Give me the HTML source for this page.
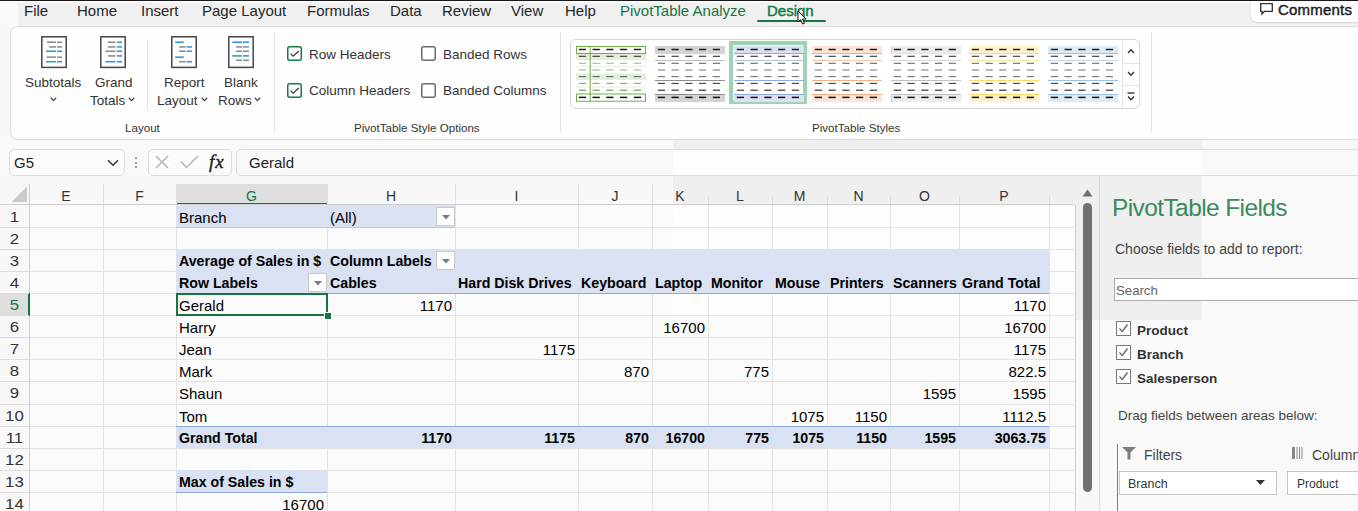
<!DOCTYPE html><html><head><meta charset="utf-8"><style>
html,body{margin:0;padding:0;}
body{width:1358px;height:511px;overflow:hidden;position:relative;background:#f7f7f7;font-family:"Liberation Sans",sans-serif;}
.t{position:absolute;white-space:nowrap;line-height:1;}
.c{position:absolute;white-space:nowrap;line-height:22px;height:22px;overflow:visible;}
svg{position:absolute;overflow:visible;}
</style></head><body>
<div style="position:absolute;left:0px;top:0px;width:1358px;height:1px;background:#1a1a1a"></div>
<div style="position:absolute;left:0px;top:1px;width:1358px;height:26px;background:#f9f9f9"></div>
<div style="position:absolute;left:18px;top:3px;width:1340px;height:24px;background:#f0f0f0"></div>
<div style="position:absolute;left:1251px;top:1px;width:120px;height:21px;background:#fdfdfd;border-radius:0 0 0 6px;box-shadow:0 1px 1px rgba(0,0,0,0.12)"></div>
<div class="t" style="left:24px;top:3px;font-size:15px;color:#262626;font-weight:normal;">File</div>
<div class="t" style="left:77px;top:3px;font-size:15px;color:#262626;font-weight:normal;">Home</div>
<div class="t" style="left:141px;top:3px;font-size:15px;color:#262626;font-weight:normal;">Insert</div>
<div class="t" style="left:202px;top:3px;font-size:15px;color:#262626;font-weight:normal;">Page Layout</div>
<div class="t" style="left:307px;top:3px;font-size:15px;color:#262626;font-weight:normal;">Formulas</div>
<div class="t" style="left:390px;top:3px;font-size:15px;color:#262626;font-weight:normal;">Data</div>
<div class="t" style="left:442px;top:3px;font-size:15px;color:#262626;font-weight:normal;">Review</div>
<div class="t" style="left:511px;top:3px;font-size:15px;color:#262626;font-weight:normal;">View</div>
<div class="t" style="left:565px;top:3px;font-size:15px;color:#262626;font-weight:normal;">Help</div>
<div class="t" style="left:620px;top:3px;font-size:15px;color:#1a7340;font-weight:normal;">PivotTable Analyze</div>
<div class="t" style="left:767px;top:3px;font-size:15px;color:#107c41;font-weight:normal;-webkit-text-stroke:0.45px #107c41">Design</div>
<div style="position:absolute;left:757px;top:20px;width:69px;height:2px;background:#16743f;border-radius:1px"></div>
<svg style="left:797px;top:10px" width="12" height="16" viewBox="0 0 12 16"><path d="M1 1 L1 12 L3.6 9.6 L5.6 14 L7.4 13.2 L5.5 9 L9 9 Z" fill="#fff" stroke="#111" stroke-width="1"/></svg>
<svg style="left:1260px;top:3px" width="14" height="12" viewBox="0 0 14 12"><path d="M0.7 0.7 H12.3 V8.3 H4.5 L2 11 V8.3 H0.7 Z" fill="none" stroke="#333" stroke-width="1.3"/></svg>
<div class="t" style="left:1278px;top:2px;font-size:15px;color:#1e1e1e;font-weight:normal;-webkit-text-stroke:0.45px #1e1e1e;letter-spacing:0.2px">Comments</div>
<div style="position:absolute;left:10px;top:26px;width:1400px;height:114px;background:#fefefe;border:1px solid #dcdcdc;border-radius:8px;box-sizing:border-box"></div>
<svg style="left:41px;top:36px" width="26" height="32" viewBox="0 0 26 32"><rect x="0.8" y="0.8" width="24.4" height="30.6" fill="#fff" stroke="#464646" stroke-width="1.5"/><line x1="6" y1="6.2" x2="15" y2="6.2" stroke="#8f8f8f" stroke-width="1.6"/><line x1="16" y1="6.2" x2="21.2" y2="6.2" stroke="#8f8f8f" stroke-width="1.6"/><line x1="8.2" y1="10.9" x2="15" y2="10.9" stroke="#8f8f8f" stroke-width="1.6"/><line x1="16" y1="10.9" x2="21" y2="10.9" stroke="#8f8f8f" stroke-width="1.6"/><line x1="5" y1="15.2" x2="15" y2="15.2" stroke="#3399dd" stroke-width="1.6"/><line x1="16" y1="15.2" x2="21" y2="15.2" stroke="#3399dd" stroke-width="1.6"/><line x1="6" y1="21.2" x2="15" y2="21.2" stroke="#8f8f8f" stroke-width="1.6"/><line x1="16" y1="21.2" x2="21" y2="21.2" stroke="#8f8f8f" stroke-width="1.6"/><line x1="5" y1="25.7" x2="15" y2="25.7" stroke="#3399dd" stroke-width="1.6"/><line x1="16" y1="25.7" x2="21" y2="25.7" stroke="#3399dd" stroke-width="1.6"/></svg>
<svg style="left:100px;top:36px" width="26" height="32" viewBox="0 0 26 32"><rect x="0.8" y="0.8" width="24.4" height="30.6" fill="#fff" stroke="#464646" stroke-width="1.5"/><line x1="7.8" y1="6.2" x2="15.6" y2="6.2" stroke="#8f8f8f" stroke-width="1.6"/><line x1="17" y1="6.2" x2="22" y2="6.2" stroke="#3399dd" stroke-width="1.6"/><line x1="8" y1="10.9" x2="15.6" y2="10.9" stroke="#8f8f8f" stroke-width="1.6"/><line x1="17" y1="10.9" x2="22" y2="10.9" stroke="#3399dd" stroke-width="1.6"/><line x1="5.4" y1="15.2" x2="15.6" y2="15.2" stroke="#8f8f8f" stroke-width="1.6"/><line x1="17" y1="15.2" x2="22" y2="15.2" stroke="#3399dd" stroke-width="1.6"/><line x1="8" y1="19.9" x2="15.6" y2="19.9" stroke="#8f8f8f" stroke-width="1.6"/><line x1="17" y1="19.9" x2="22" y2="19.9" stroke="#3399dd" stroke-width="1.6"/><line x1="5.4" y1="25.7" x2="15.6" y2="25.7" stroke="#3399dd" stroke-width="1.6"/><line x1="17" y1="25.7" x2="22" y2="25.7" stroke="#3399dd" stroke-width="1.6"/></svg>
<svg style="left:171px;top:36px" width="26" height="32" viewBox="0 0 26 32"><rect x="0.8" y="0.8" width="24.4" height="30.6" fill="#fff" stroke="#464646" stroke-width="1.5"/><line x1="4.2" y1="6.2" x2="12.8" y2="6.2" stroke="#3399dd" stroke-width="1.6"/><line x1="8" y1="10.9" x2="15" y2="10.9" stroke="#8f8f8f" stroke-width="1.6"/><line x1="16" y1="10.9" x2="21" y2="10.9" stroke="#3399dd" stroke-width="1.6"/><line x1="8" y1="15.2" x2="15" y2="15.2" stroke="#8f8f8f" stroke-width="1.6"/><line x1="16" y1="15.2" x2="21" y2="15.2" stroke="#3399dd" stroke-width="1.6"/><line x1="4.2" y1="21.2" x2="12.8" y2="21.2" stroke="#3399dd" stroke-width="1.6"/><line x1="8" y1="25.7" x2="15" y2="25.7" stroke="#8f8f8f" stroke-width="1.6"/><line x1="16" y1="25.7" x2="21" y2="25.7" stroke="#3399dd" stroke-width="1.6"/></svg>
<svg style="left:228px;top:36px" width="26" height="32" viewBox="0 0 26 32"><rect x="0.8" y="0.8" width="24.4" height="30.6" fill="#fff" stroke="#464646" stroke-width="1.5"/><line x1="4.3" y1="6.2" x2="14" y2="6.2" stroke="#3399dd" stroke-width="1.6"/><line x1="15" y1="6.2" x2="21" y2="6.2" stroke="#3399dd" stroke-width="1.6"/><line x1="8" y1="10.9" x2="14" y2="10.9" stroke="#8f8f8f" stroke-width="1.6"/><line x1="15" y1="10.9" x2="21" y2="10.9" stroke="#8f8f8f" stroke-width="1.6"/><line x1="8" y1="15.2" x2="14" y2="15.2" stroke="#8f8f8f" stroke-width="1.6"/><line x1="15" y1="15.2" x2="21" y2="15.2" stroke="#8f8f8f" stroke-width="1.6"/><line x1="4.3" y1="19.9" x2="14" y2="19.9" stroke="#3399dd" stroke-width="1.6"/><line x1="15" y1="19.9" x2="21" y2="19.9" stroke="#3399dd" stroke-width="1.6"/><line x1="8" y1="24.3" x2="14" y2="24.3" stroke="#8f8f8f" stroke-width="1.6"/><line x1="15" y1="24.3" x2="21" y2="24.3" stroke="#8f8f8f" stroke-width="1.6"/></svg>
<div class="t" style="left:25px;top:76px;font-size:13.5px;color:#333;font-weight:normal;">Subtotals</div>
<svg style="left:50px;top:97px" width="7" height="5" viewBox="0 0 7 5"><path d="M0.8 0.8 L3.5 3.6 L6.2 0.8" fill="none" stroke="#444" stroke-width="1.3"/></svg>
<div class="t" style="left:95px;top:76px;font-size:13.5px;color:#333;font-weight:normal;">Grand</div>
<div class="t" style="left:90px;top:94px;font-size:13.5px;color:#333;font-weight:normal;">Totals</div>
<svg style="left:128px;top:97px" width="7" height="5" viewBox="0 0 7 5"><path d="M0.8 0.8 L3.5 3.6 L6.2 0.8" fill="none" stroke="#444" stroke-width="1.3"/></svg>
<div class="t" style="left:164px;top:76px;font-size:13.5px;color:#333;font-weight:normal;">Report</div>
<div class="t" style="left:157px;top:94px;font-size:13.5px;color:#333;font-weight:normal;">Layout</div>
<svg style="left:201px;top:97px" width="7" height="5" viewBox="0 0 7 5"><path d="M0.8 0.8 L3.5 3.6 L6.2 0.8" fill="none" stroke="#444" stroke-width="1.3"/></svg>
<div class="t" style="left:224px;top:76px;font-size:13.5px;color:#333;font-weight:normal;">Blank</div>
<div class="t" style="left:218px;top:94px;font-size:13.5px;color:#333;font-weight:normal;">Rows</div>
<svg style="left:254px;top:97px" width="7" height="5" viewBox="0 0 7 5"><path d="M0.8 0.8 L3.5 3.6 L6.2 0.8" fill="none" stroke="#444" stroke-width="1.3"/></svg>
<div style="position:absolute;left:147px;top:39px;width:1px;height:71px;background:#e3e3e3"></div>
<div class="t" style="left:125px;top:122px;font-size:11.6px;color:#333;font-weight:normal;">Layout</div>
<div style="position:absolute;left:274px;top:32px;width:1px;height:100px;background:#e3e3e3"></div>
<svg style="left:287px;top:46.3px" width="15" height="15" viewBox="0 0 15 15"><rect x="0.75" y="0.75" width="13.5" height="13.5" rx="2" fill="#fff" stroke="#157a43" stroke-width="1.5"/><path d="M3.6 7.7 L6.1 10.2 L11.8 5" fill="none" stroke="#333" stroke-width="1.15"/></svg>
<div class="t" style="left:309px;top:48px;font-size:13.5px;color:#333;font-weight:normal;">Row Headers</div>
<svg style="left:287px;top:82.8px" width="15" height="15" viewBox="0 0 15 15"><rect x="0.75" y="0.75" width="13.5" height="13.5" rx="2" fill="#fff" stroke="#157a43" stroke-width="1.5"/><path d="M3.6 7.7 L6.1 10.2 L11.8 5" fill="none" stroke="#333" stroke-width="1.15"/></svg>
<div class="t" style="left:309px;top:84px;font-size:13.5px;color:#333;font-weight:normal;">Column Headers</div>
<svg style="left:421px;top:46.3px" width="15" height="15" viewBox="0 0 15 15"><rect x="0.75" y="0.75" width="13.5" height="13.5" rx="2" fill="#fff" stroke="#6b6b6b" stroke-width="1.5"/></svg>
<div class="t" style="left:443px;top:48px;font-size:13.5px;color:#333;font-weight:normal;">Banded Rows</div>
<svg style="left:421px;top:82.8px" width="15" height="15" viewBox="0 0 15 15"><rect x="0.75" y="0.75" width="13.5" height="13.5" rx="2" fill="#fff" stroke="#6b6b6b" stroke-width="1.5"/></svg>
<div class="t" style="left:443px;top:84px;font-size:13.5px;color:#333;font-weight:normal;">Banded Columns</div>
<div class="t" style="left:354px;top:122px;font-size:11.6px;color:#333;font-weight:normal;">PivotTable Style Options</div>
<div style="position:absolute;left:560px;top:32px;width:1px;height:100px;background:#e3e3e3"></div>
<div style="position:absolute;left:1151px;top:32px;width:1px;height:100px;background:#e3e3e3"></div>
<div class="t" style="left:812px;top:122px;font-size:11.6px;color:#333;font-weight:normal;">PivotTable Styles</div>
<div style="position:absolute;left:570px;top:39px;width:570px;height:70px;background:#fff;border:1px solid #d6d6d6;border-radius:6px;box-sizing:border-box"></div>
<div style="position:absolute;left:1122px;top:40px;width:1px;height:68px;background:#e5e5e5"></div>
<div style="position:absolute;left:1123px;top:63px;width:16px;height:1px;background:#e5e5e5"></div>
<div style="position:absolute;left:1123px;top:85px;width:16px;height:1px;background:#e5e5e5"></div>
<svg style="left:1127px;top:48px" width="8" height="6" viewBox="0 0 8 6"><path d="M1 5 L4 1.8 L7 5" fill="none" stroke="#333" stroke-width="1.4"/></svg>
<svg style="left:1127px;top:71px" width="8" height="6" viewBox="0 0 8 6"><path d="M1 1 L4 4.2 L7 1" fill="none" stroke="#333" stroke-width="1.4"/></svg>
<svg style="left:1127px;top:92px" width="8" height="10" viewBox="0 0 8 10"><path d="M0.5 1 H7.5" stroke="#333" stroke-width="1.4"/><path d="M1 4.5 L4 7.7 L7 4.5" fill="none" stroke="#333" stroke-width="1.4"/></svg>
<div style="position:absolute;left:729.3px;top:41.3px;width:78.2px;height:63px;border:4.3px solid #9dd3b1;box-sizing:border-box"></div>
<svg style="left:576px;top:46px" width="70" height="56" viewBox="0 0 70 56"><rect x="0" y="7.5" width="70" height="6.5" fill="#e2efda"/><rect x="0" y="27.5" width="70" height="6.5" fill="#e2efda"/><line x1="0" y1="20.6" x2="70" y2="20.6" stroke="#e7f0e0" stroke-width="1"/><line x1="0" y1="41" x2="70" y2="41" stroke="#e2efda" stroke-width="1"/><rect x="0.5" y="0.5" width="69" height="7" fill="none" stroke="#70ad47" stroke-width="1"/><rect x="0.5" y="48" width="69" height="7.2" fill="none" stroke="#70ad47" stroke-width="1"/><line x1="14.2" y1="0" x2="14.2" y2="56" stroke="#70ad47" stroke-width="1"/><line x1="2.8" y1="3.5" x2="10.0" y2="3.5" stroke="#1e1e1e" stroke-width="1.5"/><line x1="16.5" y1="3.5" x2="23.8" y2="3.5" stroke="#1e1e1e" stroke-width="1.5"/><line x1="30.3" y1="3.5" x2="37.5" y2="3.5" stroke="#1e1e1e" stroke-width="1.5"/><line x1="44.0" y1="3.5" x2="51.2" y2="3.5" stroke="#1e1e1e" stroke-width="1.5"/><line x1="57.8" y1="3.5" x2="65.0" y2="3.5" stroke="#1e1e1e" stroke-width="1.5"/><line x1="2.8" y1="10.3" x2="10.0" y2="10.3" stroke="#3a3a3a" stroke-width="1.15"/><line x1="16.5" y1="10.3" x2="23.8" y2="10.3" stroke="#3a3a3a" stroke-width="1.15"/><line x1="30.3" y1="10.3" x2="37.5" y2="10.3" stroke="#3a3a3a" stroke-width="1.15"/><line x1="44.0" y1="10.3" x2="51.2" y2="10.3" stroke="#3a3a3a" stroke-width="1.15"/><line x1="57.8" y1="10.3" x2="65.0" y2="10.3" stroke="#3a3a3a" stroke-width="1.15"/><line x1="2.8" y1="17.3" x2="10.0" y2="17.3" stroke="#a3bf92" stroke-width="1.15"/><line x1="16.5" y1="17.3" x2="23.8" y2="17.3" stroke="#a3bf92" stroke-width="1.15"/><line x1="30.3" y1="17.3" x2="37.5" y2="17.3" stroke="#a3bf92" stroke-width="1.15"/><line x1="44.0" y1="17.3" x2="51.2" y2="17.3" stroke="#a3bf92" stroke-width="1.15"/><line x1="57.8" y1="17.3" x2="65.0" y2="17.3" stroke="#a3bf92" stroke-width="1.15"/><line x1="2.8" y1="24.0" x2="10.0" y2="24.0" stroke="#b3c7a5" stroke-width="1.4"/><line x1="16.5" y1="24.0" x2="23.8" y2="24.0" stroke="#b3c7a5" stroke-width="1.4"/><line x1="30.3" y1="24.0" x2="37.5" y2="24.0" stroke="#b3c7a5" stroke-width="1.4"/><line x1="44.0" y1="24.0" x2="51.2" y2="24.0" stroke="#b3c7a5" stroke-width="1.4"/><line x1="57.8" y1="24.0" x2="65.0" y2="24.0" stroke="#b3c7a5" stroke-width="1.4"/><line x1="2.8" y1="30.6" x2="10.0" y2="30.6" stroke="#6a6a6a" stroke-width="1.15"/><line x1="16.5" y1="30.6" x2="23.8" y2="30.6" stroke="#6a6a6a" stroke-width="1.15"/><line x1="30.3" y1="30.6" x2="37.5" y2="30.6" stroke="#6a6a6a" stroke-width="1.15"/><line x1="44.0" y1="30.6" x2="51.2" y2="30.6" stroke="#6a6a6a" stroke-width="1.15"/><line x1="57.8" y1="30.6" x2="65.0" y2="30.6" stroke="#6a6a6a" stroke-width="1.15"/><line x1="2.8" y1="37.4" x2="10.0" y2="37.4" stroke="#8db074" stroke-width="1.15"/><line x1="16.5" y1="37.4" x2="23.8" y2="37.4" stroke="#8db074" stroke-width="1.15"/><line x1="30.3" y1="37.4" x2="37.5" y2="37.4" stroke="#8db074" stroke-width="1.15"/><line x1="44.0" y1="37.4" x2="51.2" y2="37.4" stroke="#8db074" stroke-width="1.15"/><line x1="57.8" y1="37.4" x2="65.0" y2="37.4" stroke="#8db074" stroke-width="1.15"/><line x1="2.8" y1="44.2" x2="10.0" y2="44.2" stroke="#6c9b52" stroke-width="1.15"/><line x1="16.5" y1="44.2" x2="23.8" y2="44.2" stroke="#6c9b52" stroke-width="1.15"/><line x1="30.3" y1="44.2" x2="37.5" y2="44.2" stroke="#6c9b52" stroke-width="1.15"/><line x1="44.0" y1="44.2" x2="51.2" y2="44.2" stroke="#6c9b52" stroke-width="1.15"/><line x1="57.8" y1="44.2" x2="65.0" y2="44.2" stroke="#6c9b52" stroke-width="1.15"/><line x1="2.8" y1="51.4" x2="10.0" y2="51.4" stroke="#111" stroke-width="1.5"/><line x1="16.5" y1="51.4" x2="23.8" y2="51.4" stroke="#111" stroke-width="1.5"/><line x1="30.3" y1="51.4" x2="37.5" y2="51.4" stroke="#111" stroke-width="1.5"/><line x1="44.0" y1="51.4" x2="51.2" y2="51.4" stroke="#111" stroke-width="1.5"/><line x1="57.8" y1="51.4" x2="65.0" y2="51.4" stroke="#111" stroke-width="1.5"/></svg>
<svg style="left:655px;top:46px" width="70" height="56" viewBox="0 0 70 56"><rect x="0" y="0" width="70" height="8" fill="#d4d4d4"/><rect x="0" y="48" width="70" height="8" fill="#d4d4d4"/><line x1="0" y1="14.5" x2="70" y2="14.5" stroke="#bdbdbd" stroke-width="1"/><line x1="0" y1="34.5" x2="70" y2="34.5" stroke="#8f8f8f" stroke-width="1"/><line x1="0" y1="48.5" x2="70" y2="48.5" stroke="#8f8f8f" stroke-width="1"/><line x1="2.8" y1="3.5" x2="10.0" y2="3.5" stroke="#1e1e1e" stroke-width="1.5"/><line x1="16.5" y1="3.5" x2="23.8" y2="3.5" stroke="#1e1e1e" stroke-width="1.5"/><line x1="30.3" y1="3.5" x2="37.5" y2="3.5" stroke="#1e1e1e" stroke-width="1.5"/><line x1="44.0" y1="3.5" x2="51.2" y2="3.5" stroke="#1e1e1e" stroke-width="1.5"/><line x1="57.8" y1="3.5" x2="65.0" y2="3.5" stroke="#1e1e1e" stroke-width="1.5"/><line x1="2.8" y1="10.3" x2="10.0" y2="10.3" stroke="#3a3a3a" stroke-width="1.15"/><line x1="16.5" y1="10.3" x2="23.8" y2="10.3" stroke="#3a3a3a" stroke-width="1.15"/><line x1="30.3" y1="10.3" x2="37.5" y2="10.3" stroke="#3a3a3a" stroke-width="1.15"/><line x1="44.0" y1="10.3" x2="51.2" y2="10.3" stroke="#3a3a3a" stroke-width="1.15"/><line x1="57.8" y1="10.3" x2="65.0" y2="10.3" stroke="#3a3a3a" stroke-width="1.15"/><line x1="2.8" y1="17.3" x2="10.0" y2="17.3" stroke="#6e6e6e" stroke-width="1.15"/><line x1="16.5" y1="17.3" x2="23.8" y2="17.3" stroke="#6e6e6e" stroke-width="1.15"/><line x1="30.3" y1="17.3" x2="37.5" y2="17.3" stroke="#6e6e6e" stroke-width="1.15"/><line x1="44.0" y1="17.3" x2="51.2" y2="17.3" stroke="#6e6e6e" stroke-width="1.15"/><line x1="57.8" y1="17.3" x2="65.0" y2="17.3" stroke="#6e6e6e" stroke-width="1.15"/><line x1="2.8" y1="24.0" x2="10.0" y2="24.0" stroke="#9a9a9a" stroke-width="1.4"/><line x1="16.5" y1="24.0" x2="23.8" y2="24.0" stroke="#9a9a9a" stroke-width="1.4"/><line x1="30.3" y1="24.0" x2="37.5" y2="24.0" stroke="#9a9a9a" stroke-width="1.4"/><line x1="44.0" y1="24.0" x2="51.2" y2="24.0" stroke="#9a9a9a" stroke-width="1.4"/><line x1="57.8" y1="24.0" x2="65.0" y2="24.0" stroke="#9a9a9a" stroke-width="1.4"/><line x1="2.8" y1="30.6" x2="10.0" y2="30.6" stroke="#7a7a7a" stroke-width="1.15"/><line x1="16.5" y1="30.6" x2="23.8" y2="30.6" stroke="#7a7a7a" stroke-width="1.15"/><line x1="30.3" y1="30.6" x2="37.5" y2="30.6" stroke="#7a7a7a" stroke-width="1.15"/><line x1="44.0" y1="30.6" x2="51.2" y2="30.6" stroke="#7a7a7a" stroke-width="1.15"/><line x1="57.8" y1="30.6" x2="65.0" y2="30.6" stroke="#7a7a7a" stroke-width="1.15"/><line x1="2.8" y1="37.4" x2="10.0" y2="37.4" stroke="#4a4a4a" stroke-width="1.15"/><line x1="16.5" y1="37.4" x2="23.8" y2="37.4" stroke="#4a4a4a" stroke-width="1.15"/><line x1="30.3" y1="37.4" x2="37.5" y2="37.4" stroke="#4a4a4a" stroke-width="1.15"/><line x1="44.0" y1="37.4" x2="51.2" y2="37.4" stroke="#4a4a4a" stroke-width="1.15"/><line x1="57.8" y1="37.4" x2="65.0" y2="37.4" stroke="#4a4a4a" stroke-width="1.15"/><line x1="2.8" y1="44.2" x2="10.0" y2="44.2" stroke="#2a2a2a" stroke-width="1.15"/><line x1="16.5" y1="44.2" x2="23.8" y2="44.2" stroke="#2a2a2a" stroke-width="1.15"/><line x1="30.3" y1="44.2" x2="37.5" y2="44.2" stroke="#2a2a2a" stroke-width="1.15"/><line x1="44.0" y1="44.2" x2="51.2" y2="44.2" stroke="#2a2a2a" stroke-width="1.15"/><line x1="57.8" y1="44.2" x2="65.0" y2="44.2" stroke="#2a2a2a" stroke-width="1.15"/><line x1="2.8" y1="51.4" x2="10.0" y2="51.4" stroke="#111" stroke-width="1.5"/><line x1="16.5" y1="51.4" x2="23.8" y2="51.4" stroke="#111" stroke-width="1.5"/><line x1="30.3" y1="51.4" x2="37.5" y2="51.4" stroke="#111" stroke-width="1.5"/><line x1="44.0" y1="51.4" x2="51.2" y2="51.4" stroke="#111" stroke-width="1.5"/><line x1="57.8" y1="51.4" x2="65.0" y2="51.4" stroke="#111" stroke-width="1.5"/></svg>
<svg style="left:734px;top:46px" width="70" height="56" viewBox="0 0 70 56"><rect x="0" y="0" width="70" height="8" fill="#d9e1f2"/><rect x="0" y="48" width="70" height="8" fill="#d9e1f2"/><line x1="0" y1="7.5" x2="70" y2="7.5" stroke="#8ea9db" stroke-width="1"/><line x1="0" y1="14.5" x2="70" y2="14.5" stroke="#b4c6e7" stroke-width="1"/><line x1="0" y1="34.5" x2="70" y2="34.5" stroke="#8ea9db" stroke-width="1"/><line x1="0" y1="48.5" x2="70" y2="48.5" stroke="#8ea9db" stroke-width="1"/><line x1="2.8" y1="3.5" x2="10.0" y2="3.5" stroke="#1e1e1e" stroke-width="1.5"/><line x1="16.5" y1="3.5" x2="23.8" y2="3.5" stroke="#1e1e1e" stroke-width="1.5"/><line x1="30.3" y1="3.5" x2="37.5" y2="3.5" stroke="#1e1e1e" stroke-width="1.5"/><line x1="44.0" y1="3.5" x2="51.2" y2="3.5" stroke="#1e1e1e" stroke-width="1.5"/><line x1="57.8" y1="3.5" x2="65.0" y2="3.5" stroke="#1e1e1e" stroke-width="1.5"/><line x1="2.8" y1="10.3" x2="10.0" y2="10.3" stroke="#3a3a3a" stroke-width="1.15"/><line x1="16.5" y1="10.3" x2="23.8" y2="10.3" stroke="#3a3a3a" stroke-width="1.15"/><line x1="30.3" y1="10.3" x2="37.5" y2="10.3" stroke="#3a3a3a" stroke-width="1.15"/><line x1="44.0" y1="10.3" x2="51.2" y2="10.3" stroke="#3a3a3a" stroke-width="1.15"/><line x1="57.8" y1="10.3" x2="65.0" y2="10.3" stroke="#3a3a3a" stroke-width="1.15"/><line x1="2.8" y1="17.3" x2="10.0" y2="17.3" stroke="#6e6e6e" stroke-width="1.15"/><line x1="16.5" y1="17.3" x2="23.8" y2="17.3" stroke="#6e6e6e" stroke-width="1.15"/><line x1="30.3" y1="17.3" x2="37.5" y2="17.3" stroke="#6e6e6e" stroke-width="1.15"/><line x1="44.0" y1="17.3" x2="51.2" y2="17.3" stroke="#6e6e6e" stroke-width="1.15"/><line x1="57.8" y1="17.3" x2="65.0" y2="17.3" stroke="#6e6e6e" stroke-width="1.15"/><line x1="2.8" y1="24.0" x2="10.0" y2="24.0" stroke="#9a9a9a" stroke-width="1.4"/><line x1="16.5" y1="24.0" x2="23.8" y2="24.0" stroke="#9a9a9a" stroke-width="1.4"/><line x1="30.3" y1="24.0" x2="37.5" y2="24.0" stroke="#9a9a9a" stroke-width="1.4"/><line x1="44.0" y1="24.0" x2="51.2" y2="24.0" stroke="#9a9a9a" stroke-width="1.4"/><line x1="57.8" y1="24.0" x2="65.0" y2="24.0" stroke="#9a9a9a" stroke-width="1.4"/><line x1="2.8" y1="30.6" x2="10.0" y2="30.6" stroke="#7a7a7a" stroke-width="1.15"/><line x1="16.5" y1="30.6" x2="23.8" y2="30.6" stroke="#7a7a7a" stroke-width="1.15"/><line x1="30.3" y1="30.6" x2="37.5" y2="30.6" stroke="#7a7a7a" stroke-width="1.15"/><line x1="44.0" y1="30.6" x2="51.2" y2="30.6" stroke="#7a7a7a" stroke-width="1.15"/><line x1="57.8" y1="30.6" x2="65.0" y2="30.6" stroke="#7a7a7a" stroke-width="1.15"/><line x1="2.8" y1="37.4" x2="10.0" y2="37.4" stroke="#4a4a4a" stroke-width="1.15"/><line x1="16.5" y1="37.4" x2="23.8" y2="37.4" stroke="#4a4a4a" stroke-width="1.15"/><line x1="30.3" y1="37.4" x2="37.5" y2="37.4" stroke="#4a4a4a" stroke-width="1.15"/><line x1="44.0" y1="37.4" x2="51.2" y2="37.4" stroke="#4a4a4a" stroke-width="1.15"/><line x1="57.8" y1="37.4" x2="65.0" y2="37.4" stroke="#4a4a4a" stroke-width="1.15"/><line x1="2.8" y1="44.2" x2="10.0" y2="44.2" stroke="#2a2a2a" stroke-width="1.15"/><line x1="16.5" y1="44.2" x2="23.8" y2="44.2" stroke="#2a2a2a" stroke-width="1.15"/><line x1="30.3" y1="44.2" x2="37.5" y2="44.2" stroke="#2a2a2a" stroke-width="1.15"/><line x1="44.0" y1="44.2" x2="51.2" y2="44.2" stroke="#2a2a2a" stroke-width="1.15"/><line x1="57.8" y1="44.2" x2="65.0" y2="44.2" stroke="#2a2a2a" stroke-width="1.15"/><line x1="2.8" y1="51.4" x2="10.0" y2="51.4" stroke="#111" stroke-width="1.5"/><line x1="16.5" y1="51.4" x2="23.8" y2="51.4" stroke="#111" stroke-width="1.5"/><line x1="30.3" y1="51.4" x2="37.5" y2="51.4" stroke="#111" stroke-width="1.5"/><line x1="44.0" y1="51.4" x2="51.2" y2="51.4" stroke="#111" stroke-width="1.5"/><line x1="57.8" y1="51.4" x2="65.0" y2="51.4" stroke="#111" stroke-width="1.5"/></svg>
<svg style="left:812px;top:46px" width="70" height="56" viewBox="0 0 70 56"><rect x="0" y="0" width="70" height="8" fill="#fce4d6"/><rect x="0" y="48" width="70" height="8" fill="#fce4d6"/><line x1="0" y1="7.5" x2="70" y2="7.5" stroke="#f4b084" stroke-width="1"/><line x1="0" y1="14.5" x2="70" y2="14.5" stroke="#f8cbad" stroke-width="1"/><line x1="0" y1="34.5" x2="70" y2="34.5" stroke="#f4b084" stroke-width="1"/><line x1="0" y1="48.5" x2="70" y2="48.5" stroke="#f4b084" stroke-width="1"/><line x1="2.8" y1="3.5" x2="10.0" y2="3.5" stroke="#1e1e1e" stroke-width="1.5"/><line x1="16.5" y1="3.5" x2="23.8" y2="3.5" stroke="#1e1e1e" stroke-width="1.5"/><line x1="30.3" y1="3.5" x2="37.5" y2="3.5" stroke="#1e1e1e" stroke-width="1.5"/><line x1="44.0" y1="3.5" x2="51.2" y2="3.5" stroke="#1e1e1e" stroke-width="1.5"/><line x1="57.8" y1="3.5" x2="65.0" y2="3.5" stroke="#1e1e1e" stroke-width="1.5"/><line x1="2.8" y1="10.3" x2="10.0" y2="10.3" stroke="#3a3a3a" stroke-width="1.15"/><line x1="16.5" y1="10.3" x2="23.8" y2="10.3" stroke="#3a3a3a" stroke-width="1.15"/><line x1="30.3" y1="10.3" x2="37.5" y2="10.3" stroke="#3a3a3a" stroke-width="1.15"/><line x1="44.0" y1="10.3" x2="51.2" y2="10.3" stroke="#3a3a3a" stroke-width="1.15"/><line x1="57.8" y1="10.3" x2="65.0" y2="10.3" stroke="#3a3a3a" stroke-width="1.15"/><line x1="2.8" y1="17.3" x2="10.0" y2="17.3" stroke="#6e6e6e" stroke-width="1.15"/><line x1="16.5" y1="17.3" x2="23.8" y2="17.3" stroke="#6e6e6e" stroke-width="1.15"/><line x1="30.3" y1="17.3" x2="37.5" y2="17.3" stroke="#6e6e6e" stroke-width="1.15"/><line x1="44.0" y1="17.3" x2="51.2" y2="17.3" stroke="#6e6e6e" stroke-width="1.15"/><line x1="57.8" y1="17.3" x2="65.0" y2="17.3" stroke="#6e6e6e" stroke-width="1.15"/><line x1="2.8" y1="24.0" x2="10.0" y2="24.0" stroke="#9a9a9a" stroke-width="1.4"/><line x1="16.5" y1="24.0" x2="23.8" y2="24.0" stroke="#9a9a9a" stroke-width="1.4"/><line x1="30.3" y1="24.0" x2="37.5" y2="24.0" stroke="#9a9a9a" stroke-width="1.4"/><line x1="44.0" y1="24.0" x2="51.2" y2="24.0" stroke="#9a9a9a" stroke-width="1.4"/><line x1="57.8" y1="24.0" x2="65.0" y2="24.0" stroke="#9a9a9a" stroke-width="1.4"/><line x1="2.8" y1="30.6" x2="10.0" y2="30.6" stroke="#7a7a7a" stroke-width="1.15"/><line x1="16.5" y1="30.6" x2="23.8" y2="30.6" stroke="#7a7a7a" stroke-width="1.15"/><line x1="30.3" y1="30.6" x2="37.5" y2="30.6" stroke="#7a7a7a" stroke-width="1.15"/><line x1="44.0" y1="30.6" x2="51.2" y2="30.6" stroke="#7a7a7a" stroke-width="1.15"/><line x1="57.8" y1="30.6" x2="65.0" y2="30.6" stroke="#7a7a7a" stroke-width="1.15"/><line x1="2.8" y1="37.4" x2="10.0" y2="37.4" stroke="#4a4a4a" stroke-width="1.15"/><line x1="16.5" y1="37.4" x2="23.8" y2="37.4" stroke="#4a4a4a" stroke-width="1.15"/><line x1="30.3" y1="37.4" x2="37.5" y2="37.4" stroke="#4a4a4a" stroke-width="1.15"/><line x1="44.0" y1="37.4" x2="51.2" y2="37.4" stroke="#4a4a4a" stroke-width="1.15"/><line x1="57.8" y1="37.4" x2="65.0" y2="37.4" stroke="#4a4a4a" stroke-width="1.15"/><line x1="2.8" y1="44.2" x2="10.0" y2="44.2" stroke="#2a2a2a" stroke-width="1.15"/><line x1="16.5" y1="44.2" x2="23.8" y2="44.2" stroke="#2a2a2a" stroke-width="1.15"/><line x1="30.3" y1="44.2" x2="37.5" y2="44.2" stroke="#2a2a2a" stroke-width="1.15"/><line x1="44.0" y1="44.2" x2="51.2" y2="44.2" stroke="#2a2a2a" stroke-width="1.15"/><line x1="57.8" y1="44.2" x2="65.0" y2="44.2" stroke="#2a2a2a" stroke-width="1.15"/><line x1="2.8" y1="51.4" x2="10.0" y2="51.4" stroke="#111" stroke-width="1.5"/><line x1="16.5" y1="51.4" x2="23.8" y2="51.4" stroke="#111" stroke-width="1.5"/><line x1="30.3" y1="51.4" x2="37.5" y2="51.4" stroke="#111" stroke-width="1.5"/><line x1="44.0" y1="51.4" x2="51.2" y2="51.4" stroke="#111" stroke-width="1.5"/><line x1="57.8" y1="51.4" x2="65.0" y2="51.4" stroke="#111" stroke-width="1.5"/></svg>
<svg style="left:891px;top:46px" width="70" height="56" viewBox="0 0 70 56"><rect x="0" y="0" width="70" height="8" fill="#ececec"/><rect x="0" y="48" width="70" height="8" fill="#ececec"/><line x1="0" y1="7.5" x2="70" y2="7.5" stroke="#e0e0e0" stroke-width="1"/><line x1="0" y1="14.5" x2="70" y2="14.5" stroke="#d9d9d9" stroke-width="1"/><line x1="0" y1="34.5" x2="70" y2="34.5" stroke="#bfbfbf" stroke-width="1"/><line x1="0" y1="48.5" x2="70" y2="48.5" stroke="#bfbfbf" stroke-width="1"/><line x1="0.5" y1="0" x2="0.5" y2="7.6" stroke="#cfcfcf" stroke-width="1"/><line x1="0.5" y1="48.3" x2="0.5" y2="56" stroke="#cfcfcf" stroke-width="1"/><line x1="2.8" y1="3.5" x2="10.0" y2="3.5" stroke="#1e1e1e" stroke-width="1.5"/><line x1="16.5" y1="3.5" x2="23.8" y2="3.5" stroke="#1e1e1e" stroke-width="1.5"/><line x1="30.3" y1="3.5" x2="37.5" y2="3.5" stroke="#1e1e1e" stroke-width="1.5"/><line x1="44.0" y1="3.5" x2="51.2" y2="3.5" stroke="#1e1e1e" stroke-width="1.5"/><line x1="57.8" y1="3.5" x2="65.0" y2="3.5" stroke="#1e1e1e" stroke-width="1.5"/><line x1="2.8" y1="10.3" x2="10.0" y2="10.3" stroke="#3a3a3a" stroke-width="1.15"/><line x1="16.5" y1="10.3" x2="23.8" y2="10.3" stroke="#3a3a3a" stroke-width="1.15"/><line x1="30.3" y1="10.3" x2="37.5" y2="10.3" stroke="#3a3a3a" stroke-width="1.15"/><line x1="44.0" y1="10.3" x2="51.2" y2="10.3" stroke="#3a3a3a" stroke-width="1.15"/><line x1="57.8" y1="10.3" x2="65.0" y2="10.3" stroke="#3a3a3a" stroke-width="1.15"/><line x1="2.8" y1="17.3" x2="10.0" y2="17.3" stroke="#6e6e6e" stroke-width="1.15"/><line x1="16.5" y1="17.3" x2="23.8" y2="17.3" stroke="#6e6e6e" stroke-width="1.15"/><line x1="30.3" y1="17.3" x2="37.5" y2="17.3" stroke="#6e6e6e" stroke-width="1.15"/><line x1="44.0" y1="17.3" x2="51.2" y2="17.3" stroke="#6e6e6e" stroke-width="1.15"/><line x1="57.8" y1="17.3" x2="65.0" y2="17.3" stroke="#6e6e6e" stroke-width="1.15"/><line x1="2.8" y1="24.0" x2="10.0" y2="24.0" stroke="#9a9a9a" stroke-width="1.4"/><line x1="16.5" y1="24.0" x2="23.8" y2="24.0" stroke="#9a9a9a" stroke-width="1.4"/><line x1="30.3" y1="24.0" x2="37.5" y2="24.0" stroke="#9a9a9a" stroke-width="1.4"/><line x1="44.0" y1="24.0" x2="51.2" y2="24.0" stroke="#9a9a9a" stroke-width="1.4"/><line x1="57.8" y1="24.0" x2="65.0" y2="24.0" stroke="#9a9a9a" stroke-width="1.4"/><line x1="2.8" y1="30.6" x2="10.0" y2="30.6" stroke="#7a7a7a" stroke-width="1.15"/><line x1="16.5" y1="30.6" x2="23.8" y2="30.6" stroke="#7a7a7a" stroke-width="1.15"/><line x1="30.3" y1="30.6" x2="37.5" y2="30.6" stroke="#7a7a7a" stroke-width="1.15"/><line x1="44.0" y1="30.6" x2="51.2" y2="30.6" stroke="#7a7a7a" stroke-width="1.15"/><line x1="57.8" y1="30.6" x2="65.0" y2="30.6" stroke="#7a7a7a" stroke-width="1.15"/><line x1="2.8" y1="37.4" x2="10.0" y2="37.4" stroke="#4a4a4a" stroke-width="1.15"/><line x1="16.5" y1="37.4" x2="23.8" y2="37.4" stroke="#4a4a4a" stroke-width="1.15"/><line x1="30.3" y1="37.4" x2="37.5" y2="37.4" stroke="#4a4a4a" stroke-width="1.15"/><line x1="44.0" y1="37.4" x2="51.2" y2="37.4" stroke="#4a4a4a" stroke-width="1.15"/><line x1="57.8" y1="37.4" x2="65.0" y2="37.4" stroke="#4a4a4a" stroke-width="1.15"/><line x1="2.8" y1="44.2" x2="10.0" y2="44.2" stroke="#2a2a2a" stroke-width="1.15"/><line x1="16.5" y1="44.2" x2="23.8" y2="44.2" stroke="#2a2a2a" stroke-width="1.15"/><line x1="30.3" y1="44.2" x2="37.5" y2="44.2" stroke="#2a2a2a" stroke-width="1.15"/><line x1="44.0" y1="44.2" x2="51.2" y2="44.2" stroke="#2a2a2a" stroke-width="1.15"/><line x1="57.8" y1="44.2" x2="65.0" y2="44.2" stroke="#2a2a2a" stroke-width="1.15"/><line x1="2.8" y1="51.4" x2="10.0" y2="51.4" stroke="#111" stroke-width="1.5"/><line x1="16.5" y1="51.4" x2="23.8" y2="51.4" stroke="#111" stroke-width="1.5"/><line x1="30.3" y1="51.4" x2="37.5" y2="51.4" stroke="#111" stroke-width="1.5"/><line x1="44.0" y1="51.4" x2="51.2" y2="51.4" stroke="#111" stroke-width="1.5"/><line x1="57.8" y1="51.4" x2="65.0" y2="51.4" stroke="#111" stroke-width="1.5"/></svg>
<svg style="left:969px;top:46px" width="70" height="56" viewBox="0 0 70 56"><rect x="0" y="0" width="70" height="8" fill="#fff2cc"/><rect x="0" y="48" width="70" height="8" fill="#fff2cc"/><line x1="0" y1="7.5" x2="70" y2="7.5" stroke="#ffd966" stroke-width="1"/><line x1="0" y1="14.5" x2="70" y2="14.5" stroke="#ffe699" stroke-width="1"/><line x1="0" y1="34.5" x2="70" y2="34.5" stroke="#ffd966" stroke-width="1"/><line x1="0" y1="48.5" x2="70" y2="48.5" stroke="#ffd966" stroke-width="1"/><line x1="2.8" y1="3.5" x2="10.0" y2="3.5" stroke="#1e1e1e" stroke-width="1.5"/><line x1="16.5" y1="3.5" x2="23.8" y2="3.5" stroke="#1e1e1e" stroke-width="1.5"/><line x1="30.3" y1="3.5" x2="37.5" y2="3.5" stroke="#1e1e1e" stroke-width="1.5"/><line x1="44.0" y1="3.5" x2="51.2" y2="3.5" stroke="#1e1e1e" stroke-width="1.5"/><line x1="57.8" y1="3.5" x2="65.0" y2="3.5" stroke="#1e1e1e" stroke-width="1.5"/><line x1="2.8" y1="10.3" x2="10.0" y2="10.3" stroke="#3a3a3a" stroke-width="1.15"/><line x1="16.5" y1="10.3" x2="23.8" y2="10.3" stroke="#3a3a3a" stroke-width="1.15"/><line x1="30.3" y1="10.3" x2="37.5" y2="10.3" stroke="#3a3a3a" stroke-width="1.15"/><line x1="44.0" y1="10.3" x2="51.2" y2="10.3" stroke="#3a3a3a" stroke-width="1.15"/><line x1="57.8" y1="10.3" x2="65.0" y2="10.3" stroke="#3a3a3a" stroke-width="1.15"/><line x1="2.8" y1="17.3" x2="10.0" y2="17.3" stroke="#6e6e6e" stroke-width="1.15"/><line x1="16.5" y1="17.3" x2="23.8" y2="17.3" stroke="#6e6e6e" stroke-width="1.15"/><line x1="30.3" y1="17.3" x2="37.5" y2="17.3" stroke="#6e6e6e" stroke-width="1.15"/><line x1="44.0" y1="17.3" x2="51.2" y2="17.3" stroke="#6e6e6e" stroke-width="1.15"/><line x1="57.8" y1="17.3" x2="65.0" y2="17.3" stroke="#6e6e6e" stroke-width="1.15"/><line x1="2.8" y1="24.0" x2="10.0" y2="24.0" stroke="#9a9a9a" stroke-width="1.4"/><line x1="16.5" y1="24.0" x2="23.8" y2="24.0" stroke="#9a9a9a" stroke-width="1.4"/><line x1="30.3" y1="24.0" x2="37.5" y2="24.0" stroke="#9a9a9a" stroke-width="1.4"/><line x1="44.0" y1="24.0" x2="51.2" y2="24.0" stroke="#9a9a9a" stroke-width="1.4"/><line x1="57.8" y1="24.0" x2="65.0" y2="24.0" stroke="#9a9a9a" stroke-width="1.4"/><line x1="2.8" y1="30.6" x2="10.0" y2="30.6" stroke="#7a7a7a" stroke-width="1.15"/><line x1="16.5" y1="30.6" x2="23.8" y2="30.6" stroke="#7a7a7a" stroke-width="1.15"/><line x1="30.3" y1="30.6" x2="37.5" y2="30.6" stroke="#7a7a7a" stroke-width="1.15"/><line x1="44.0" y1="30.6" x2="51.2" y2="30.6" stroke="#7a7a7a" stroke-width="1.15"/><line x1="57.8" y1="30.6" x2="65.0" y2="30.6" stroke="#7a7a7a" stroke-width="1.15"/><line x1="2.8" y1="37.4" x2="10.0" y2="37.4" stroke="#4a4a4a" stroke-width="1.15"/><line x1="16.5" y1="37.4" x2="23.8" y2="37.4" stroke="#4a4a4a" stroke-width="1.15"/><line x1="30.3" y1="37.4" x2="37.5" y2="37.4" stroke="#4a4a4a" stroke-width="1.15"/><line x1="44.0" y1="37.4" x2="51.2" y2="37.4" stroke="#4a4a4a" stroke-width="1.15"/><line x1="57.8" y1="37.4" x2="65.0" y2="37.4" stroke="#4a4a4a" stroke-width="1.15"/><line x1="2.8" y1="44.2" x2="10.0" y2="44.2" stroke="#2a2a2a" stroke-width="1.15"/><line x1="16.5" y1="44.2" x2="23.8" y2="44.2" stroke="#2a2a2a" stroke-width="1.15"/><line x1="30.3" y1="44.2" x2="37.5" y2="44.2" stroke="#2a2a2a" stroke-width="1.15"/><line x1="44.0" y1="44.2" x2="51.2" y2="44.2" stroke="#2a2a2a" stroke-width="1.15"/><line x1="57.8" y1="44.2" x2="65.0" y2="44.2" stroke="#2a2a2a" stroke-width="1.15"/><line x1="2.8" y1="51.4" x2="10.0" y2="51.4" stroke="#111" stroke-width="1.5"/><line x1="16.5" y1="51.4" x2="23.8" y2="51.4" stroke="#111" stroke-width="1.5"/><line x1="30.3" y1="51.4" x2="37.5" y2="51.4" stroke="#111" stroke-width="1.5"/><line x1="44.0" y1="51.4" x2="51.2" y2="51.4" stroke="#111" stroke-width="1.5"/><line x1="57.8" y1="51.4" x2="65.0" y2="51.4" stroke="#111" stroke-width="1.5"/></svg>
<svg style="left:1048px;top:46px" width="70" height="56" viewBox="0 0 70 56"><rect x="0" y="0" width="70" height="8" fill="#ddebf7"/><rect x="0" y="48" width="70" height="8" fill="#ddebf7"/><line x1="0" y1="7.5" x2="70" y2="7.5" stroke="#9bc2e6" stroke-width="1"/><line x1="0" y1="14.5" x2="70" y2="14.5" stroke="#bdd7ee" stroke-width="1"/><line x1="0" y1="34.5" x2="70" y2="34.5" stroke="#9bc2e6" stroke-width="1"/><line x1="0" y1="48.5" x2="70" y2="48.5" stroke="#9bc2e6" stroke-width="1"/><line x1="2.8" y1="3.5" x2="10.0" y2="3.5" stroke="#1e1e1e" stroke-width="1.5"/><line x1="16.5" y1="3.5" x2="23.8" y2="3.5" stroke="#1e1e1e" stroke-width="1.5"/><line x1="30.3" y1="3.5" x2="37.5" y2="3.5" stroke="#1e1e1e" stroke-width="1.5"/><line x1="44.0" y1="3.5" x2="51.2" y2="3.5" stroke="#1e1e1e" stroke-width="1.5"/><line x1="57.8" y1="3.5" x2="65.0" y2="3.5" stroke="#1e1e1e" stroke-width="1.5"/><line x1="2.8" y1="10.3" x2="10.0" y2="10.3" stroke="#3a3a3a" stroke-width="1.15"/><line x1="16.5" y1="10.3" x2="23.8" y2="10.3" stroke="#3a3a3a" stroke-width="1.15"/><line x1="30.3" y1="10.3" x2="37.5" y2="10.3" stroke="#3a3a3a" stroke-width="1.15"/><line x1="44.0" y1="10.3" x2="51.2" y2="10.3" stroke="#3a3a3a" stroke-width="1.15"/><line x1="57.8" y1="10.3" x2="65.0" y2="10.3" stroke="#3a3a3a" stroke-width="1.15"/><line x1="2.8" y1="17.3" x2="10.0" y2="17.3" stroke="#6e6e6e" stroke-width="1.15"/><line x1="16.5" y1="17.3" x2="23.8" y2="17.3" stroke="#6e6e6e" stroke-width="1.15"/><line x1="30.3" y1="17.3" x2="37.5" y2="17.3" stroke="#6e6e6e" stroke-width="1.15"/><line x1="44.0" y1="17.3" x2="51.2" y2="17.3" stroke="#6e6e6e" stroke-width="1.15"/><line x1="57.8" y1="17.3" x2="65.0" y2="17.3" stroke="#6e6e6e" stroke-width="1.15"/><line x1="2.8" y1="24.0" x2="10.0" y2="24.0" stroke="#9a9a9a" stroke-width="1.4"/><line x1="16.5" y1="24.0" x2="23.8" y2="24.0" stroke="#9a9a9a" stroke-width="1.4"/><line x1="30.3" y1="24.0" x2="37.5" y2="24.0" stroke="#9a9a9a" stroke-width="1.4"/><line x1="44.0" y1="24.0" x2="51.2" y2="24.0" stroke="#9a9a9a" stroke-width="1.4"/><line x1="57.8" y1="24.0" x2="65.0" y2="24.0" stroke="#9a9a9a" stroke-width="1.4"/><line x1="2.8" y1="30.6" x2="10.0" y2="30.6" stroke="#7a7a7a" stroke-width="1.15"/><line x1="16.5" y1="30.6" x2="23.8" y2="30.6" stroke="#7a7a7a" stroke-width="1.15"/><line x1="30.3" y1="30.6" x2="37.5" y2="30.6" stroke="#7a7a7a" stroke-width="1.15"/><line x1="44.0" y1="30.6" x2="51.2" y2="30.6" stroke="#7a7a7a" stroke-width="1.15"/><line x1="57.8" y1="30.6" x2="65.0" y2="30.6" stroke="#7a7a7a" stroke-width="1.15"/><line x1="2.8" y1="37.4" x2="10.0" y2="37.4" stroke="#4a4a4a" stroke-width="1.15"/><line x1="16.5" y1="37.4" x2="23.8" y2="37.4" stroke="#4a4a4a" stroke-width="1.15"/><line x1="30.3" y1="37.4" x2="37.5" y2="37.4" stroke="#4a4a4a" stroke-width="1.15"/><line x1="44.0" y1="37.4" x2="51.2" y2="37.4" stroke="#4a4a4a" stroke-width="1.15"/><line x1="57.8" y1="37.4" x2="65.0" y2="37.4" stroke="#4a4a4a" stroke-width="1.15"/><line x1="2.8" y1="44.2" x2="10.0" y2="44.2" stroke="#2a2a2a" stroke-width="1.15"/><line x1="16.5" y1="44.2" x2="23.8" y2="44.2" stroke="#2a2a2a" stroke-width="1.15"/><line x1="30.3" y1="44.2" x2="37.5" y2="44.2" stroke="#2a2a2a" stroke-width="1.15"/><line x1="44.0" y1="44.2" x2="51.2" y2="44.2" stroke="#2a2a2a" stroke-width="1.15"/><line x1="57.8" y1="44.2" x2="65.0" y2="44.2" stroke="#2a2a2a" stroke-width="1.15"/><line x1="2.8" y1="51.4" x2="10.0" y2="51.4" stroke="#111" stroke-width="1.5"/><line x1="16.5" y1="51.4" x2="23.8" y2="51.4" stroke="#111" stroke-width="1.5"/><line x1="30.3" y1="51.4" x2="37.5" y2="51.4" stroke="#111" stroke-width="1.5"/><line x1="44.0" y1="51.4" x2="51.2" y2="51.4" stroke="#111" stroke-width="1.5"/><line x1="57.8" y1="51.4" x2="65.0" y2="51.4" stroke="#111" stroke-width="1.5"/></svg>
<div style="position:absolute;left:0px;top:140px;width:1358px;height:36px;background:#f9f9f9"></div>
<div style="position:absolute;left:0px;top:136px;width:10px;height:4px;background:#f9f9f9"></div>
<div style="position:absolute;left:673px;top:140px;width:529px;height:36px;background:#fefefe"></div>
<div style="position:absolute;left:673px;top:140px;width:529px;height:9px;background:#eeeeee"></div>
<div style="position:absolute;left:1202px;top:140px;width:156px;height:9px;background:#f7f7f7"></div>
<div style="position:absolute;left:9px;top:149px;width:116px;height:27px;background:#fcfcfc;border:1px solid #dcdcdc;border-radius:5px;box-sizing:border-box"></div>
<div class="t" style="left:14px;top:155px;font-size:15px;color:#1e1e1e;font-weight:normal;">G5</div>
<svg style="left:107px;top:159px" width="12" height="8" viewBox="0 0 12 8"><path d="M1 1.2 L6 6.2 L11 1.2" fill="none" stroke="#333" stroke-width="1.5"/></svg>
<div style="position:absolute;left:135px;top:157px;width:2.2px;height:2.2px;background:#7a7a7a;border-radius:1px"></div>
<div style="position:absolute;left:135px;top:161.5px;width:2.2px;height:2.2px;background:#7a7a7a;border-radius:1px"></div>
<div style="position:absolute;left:135px;top:166px;width:2.2px;height:2.2px;background:#7a7a7a;border-radius:1px"></div>
<div style="position:absolute;left:148px;top:149px;width:84px;height:27px;background:#fcfcfc;border:1px solid #dcdcdc;border-radius:5px;box-sizing:border-box"></div>
<svg style="left:155px;top:155px" width="14" height="14" viewBox="0 0 14 14"><path d="M1 1 L13 13 M13 1 L1 13" stroke="#b5b5b5" stroke-width="1.5"/></svg>
<svg style="left:180px;top:155px" width="19" height="14" viewBox="0 0 19 14"><path d="M1 6.5 L6.5 12.5 L18 1" fill="none" stroke="#b5b5b5" stroke-width="1.5"/></svg>
<div class="t" style="left:209px;top:151.5px;font-size:19px;color:#222;font-weight:normal;font-family:'Liberation Serif', serif;font-style:italic;letter-spacing:1px;-webkit-text-stroke:0.4px #222">fx</div>
<div style="position:absolute;left:236px;top:149px;width:1200px;height:27px;background:transparent;border:1px solid #dcdcdc;border-radius:5px;box-sizing:border-box"></div>
<div class="t" style="left:249px;top:155px;font-size:15px;color:#1e1e1e;font-weight:normal;">Gerald</div>
<div style="position:absolute;left:0px;top:176px;width:1100px;height:335px;background:#f8f8f8"></div>
<div style="position:absolute;left:673px;top:176px;width:427px;height:29px;background:#efefef"></div>
<div style="position:absolute;left:30px;top:206px;width:1045px;height:305px;background:#fbfbfb"></div>
<div style="position:absolute;left:673px;top:206px;width:402px;height:114px;background:#fefefe"></div>
<svg style="left:11px;top:186px" width="17" height="17" viewBox="0 0 17 17"><path d="M16 0.5 L16 16 L0.5 16 Z" fill="#cbcbcb"/></svg>
<div style="position:absolute;left:176px;top:184px;width:151px;height:21px;background:#dedede"></div>
<div style="position:absolute;left:176px;top:203px;width:151px;height:2px;background:#16743f"></div>
<div class="t" style="left:29px;width:74px;text-align:center;top:189px;font-size:14px;color:#333">E</div>
<div class="t" style="left:103px;width:73px;text-align:center;top:189px;font-size:14px;color:#333">F</div>
<div class="t" style="left:176px;width:151px;text-align:center;top:189px;font-size:14px;color:#16743f">G</div>
<div class="t" style="left:327px;width:128px;text-align:center;top:189px;font-size:14px;color:#333">H</div>
<div class="t" style="left:455px;width:123px;text-align:center;top:189px;font-size:14px;color:#333">I</div>
<div class="t" style="left:578px;width:74px;text-align:center;top:189px;font-size:14px;color:#333">J</div>
<div class="t" style="left:652px;width:56px;text-align:center;top:189px;font-size:14px;color:#333">K</div>
<div class="t" style="left:708px;width:64px;text-align:center;top:189px;font-size:14px;color:#333">L</div>
<div class="t" style="left:772px;width:55px;text-align:center;top:189px;font-size:14px;color:#333">M</div>
<div class="t" style="left:827px;width:63px;text-align:center;top:189px;font-size:14px;color:#333">N</div>
<div class="t" style="left:890px;width:69px;text-align:center;top:189px;font-size:14px;color:#333">O</div>
<div class="t" style="left:959px;width:90px;text-align:center;top:189px;font-size:14px;color:#333">P</div>
<div style="position:absolute;left:103px;top:184px;width:1px;height:21px;background:#dedede"></div>
<div style="position:absolute;left:176px;top:184px;width:1px;height:21px;background:#dedede"></div>
<div style="position:absolute;left:327px;top:184px;width:1px;height:21px;background:#dedede"></div>
<div style="position:absolute;left:455px;top:184px;width:1px;height:21px;background:#dedede"></div>
<div style="position:absolute;left:578px;top:184px;width:1px;height:21px;background:#dedede"></div>
<div style="position:absolute;left:652px;top:184px;width:1px;height:21px;background:#dedede"></div>
<div style="position:absolute;left:708px;top:196px;width:1px;height:9px;background:#dadada"></div>
<div style="position:absolute;left:772px;top:196px;width:1px;height:9px;background:#dadada"></div>
<div style="position:absolute;left:827px;top:196px;width:1px;height:9px;background:#dadada"></div>
<div style="position:absolute;left:890px;top:196px;width:1px;height:9px;background:#dadada"></div>
<div style="position:absolute;left:959px;top:196px;width:1px;height:9px;background:#dadada"></div>
<div style="position:absolute;left:1049px;top:196px;width:1px;height:9px;background:#dadada"></div>
<div style="position:absolute;left:0px;top:204px;width:1075px;height:1px;background:#cfcfcf"></div>
<div style="position:absolute;left:29px;top:184px;width:1px;height:327px;background:#cfcfcf"></div>
<div style="position:absolute;left:0px;top:294px;width:29px;height:21px;background:#dedede"></div>
<div style="position:absolute;left:28px;top:293px;width:2px;height:23px;background:#16743f"></div>
<div class="t" style="left:0px;width:29px;text-align:center;top:210px;font-size:14px;color:#333;transform:scaleX(1.2);transform-origin:15px 0">1</div>
<div style="position:absolute;left:0px;top:227px;width:29px;height:1px;background:#dcdcdc"></div>
<div class="t" style="left:0px;width:29px;text-align:center;top:232px;font-size:14px;color:#333;transform:scaleX(1.2);transform-origin:15px 0">2</div>
<div style="position:absolute;left:0px;top:249px;width:29px;height:1px;background:#dcdcdc"></div>
<div class="t" style="left:0px;width:29px;text-align:center;top:254px;font-size:14px;color:#333;transform:scaleX(1.2);transform-origin:15px 0">3</div>
<div style="position:absolute;left:0px;top:271px;width:29px;height:1px;background:#dcdcdc"></div>
<div class="t" style="left:0px;width:29px;text-align:center;top:276px;font-size:14px;color:#333;transform:scaleX(1.2);transform-origin:15px 0">4</div>
<div style="position:absolute;left:0px;top:293px;width:29px;height:1px;background:#dcdcdc"></div>
<div class="t" style="left:0px;width:29px;text-align:center;top:298px;font-size:14px;color:#16743f;transform:scaleX(1.2);transform-origin:15px 0">5</div>
<div style="position:absolute;left:0px;top:315px;width:29px;height:1px;background:#dcdcdc"></div>
<div class="t" style="left:0px;width:29px;text-align:center;top:320px;font-size:14px;color:#333;transform:scaleX(1.2);transform-origin:15px 0">6</div>
<div style="position:absolute;left:0px;top:337px;width:29px;height:1px;background:#dcdcdc"></div>
<div class="t" style="left:0px;width:29px;text-align:center;top:342px;font-size:14px;color:#333;transform:scaleX(1.2);transform-origin:15px 0">7</div>
<div style="position:absolute;left:0px;top:359px;width:29px;height:1px;background:#dcdcdc"></div>
<div class="t" style="left:0px;width:29px;text-align:center;top:364px;font-size:14px;color:#333;transform:scaleX(1.2);transform-origin:15px 0">8</div>
<div style="position:absolute;left:0px;top:381px;width:29px;height:1px;background:#dcdcdc"></div>
<div class="t" style="left:0px;width:29px;text-align:center;top:386px;font-size:14px;color:#333;transform:scaleX(1.2);transform-origin:15px 0">9</div>
<div style="position:absolute;left:0px;top:404px;width:29px;height:1px;background:#dcdcdc"></div>
<div class="t" style="left:0px;width:29px;text-align:center;top:409px;font-size:14px;color:#333;transform:scaleX(1.2);transform-origin:15px 0">10</div>
<div style="position:absolute;left:0px;top:426px;width:29px;height:1px;background:#dcdcdc"></div>
<div class="t" style="left:0px;width:29px;text-align:center;top:431px;font-size:14px;color:#333;transform:scaleX(1.2);transform-origin:15px 0">11</div>
<div style="position:absolute;left:0px;top:448px;width:29px;height:1px;background:#dcdcdc"></div>
<div class="t" style="left:0px;width:29px;text-align:center;top:453px;font-size:14px;color:#333;transform:scaleX(1.2);transform-origin:15px 0">12</div>
<div style="position:absolute;left:0px;top:470px;width:29px;height:1px;background:#dcdcdc"></div>
<div class="t" style="left:0px;width:29px;text-align:center;top:475px;font-size:14px;color:#333;transform:scaleX(1.2);transform-origin:15px 0">13</div>
<div style="position:absolute;left:0px;top:492px;width:29px;height:1px;background:#dcdcdc"></div>
<div class="t" style="left:0px;width:29px;text-align:center;top:497px;font-size:14px;color:#333;transform:scaleX(1.2);transform-origin:15px 0">14</div>
<div style="position:absolute;left:0px;top:514px;width:29px;height:1px;background:#dcdcdc"></div>
<div style="position:absolute;left:103px;top:205px;width:1px;height:306px;background:#e3e3e3"></div>
<div style="position:absolute;left:176px;top:205px;width:1px;height:306px;background:#e3e3e3"></div>
<div style="position:absolute;left:327px;top:205px;width:1px;height:306px;background:#e3e3e3"></div>
<div style="position:absolute;left:455px;top:205px;width:1px;height:306px;background:#e3e3e3"></div>
<div style="position:absolute;left:578px;top:205px;width:1px;height:306px;background:#e3e3e3"></div>
<div style="position:absolute;left:652px;top:205px;width:1px;height:306px;background:#e3e3e3"></div>
<div style="position:absolute;left:708px;top:205px;width:1px;height:306px;background:#e3e3e3"></div>
<div style="position:absolute;left:772px;top:205px;width:1px;height:306px;background:#e3e3e3"></div>
<div style="position:absolute;left:827px;top:205px;width:1px;height:306px;background:#e3e3e3"></div>
<div style="position:absolute;left:890px;top:205px;width:1px;height:306px;background:#e3e3e3"></div>
<div style="position:absolute;left:959px;top:205px;width:1px;height:306px;background:#e3e3e3"></div>
<div style="position:absolute;left:1049px;top:205px;width:1px;height:306px;background:#e3e3e3"></div>
<div style="position:absolute;left:1075px;top:205px;width:1px;height:306px;background:#e3e3e3"></div>
<div style="position:absolute;left:30px;top:227px;width:1045px;height:1px;background:#e3e3e3"></div>
<div style="position:absolute;left:30px;top:249px;width:1045px;height:1px;background:#e3e3e3"></div>
<div style="position:absolute;left:30px;top:271px;width:1045px;height:1px;background:#e3e3e3"></div>
<div style="position:absolute;left:30px;top:293px;width:1045px;height:1px;background:#e3e3e3"></div>
<div style="position:absolute;left:30px;top:315px;width:1045px;height:1px;background:#e3e3e3"></div>
<div style="position:absolute;left:30px;top:337px;width:1045px;height:1px;background:#e3e3e3"></div>
<div style="position:absolute;left:30px;top:359px;width:1045px;height:1px;background:#e3e3e3"></div>
<div style="position:absolute;left:30px;top:381px;width:1045px;height:1px;background:#e3e3e3"></div>
<div style="position:absolute;left:30px;top:404px;width:1045px;height:1px;background:#e3e3e3"></div>
<div style="position:absolute;left:30px;top:426px;width:1045px;height:1px;background:#e3e3e3"></div>
<div style="position:absolute;left:30px;top:448px;width:1045px;height:1px;background:#e3e3e3"></div>
<div style="position:absolute;left:30px;top:470px;width:1045px;height:1px;background:#e3e3e3"></div>
<div style="position:absolute;left:30px;top:492px;width:1045px;height:1px;background:#e3e3e3"></div>
<div style="position:absolute;left:30px;top:514px;width:1045px;height:1px;background:#e3e3e3"></div>
<div style="position:absolute;left:1075px;top:205px;width:1px;height:306px;background:#d0d0d0"></div>
<div style="position:absolute;left:176px;top:205px;width:279px;height:22px;background:#d9e1f2"></div>
<div style="position:absolute;left:176px;top:227px;width:279px;height:1px;background:#b4c6e7"></div>
<div style="position:absolute;left:176px;top:249px;width:873px;height:44px;background:#d9e1f2"></div>
<div style="position:absolute;left:176px;top:293px;width:873px;height:1px;background:#8ea9db"></div>
<div style="position:absolute;left:176px;top:426px;width:873px;height:22px;background:#d9e1f2"></div>
<div style="position:absolute;left:176px;top:426px;width:873px;height:1px;background:#8ea9db"></div>
<div style="position:absolute;left:176px;top:470px;width:151px;height:22px;background:#d9e1f2"></div>
<div style="position:absolute;left:176px;top:492px;width:151px;height:1px;background:#8ea9db"></div>
<div class="t" style="left:179px;top:210px;font-size:15px;font-weight:normal;color:#000">Branch</div>
<div class="t" style="left:330px;top:210px;font-size:15px;font-weight:normal;color:#000">(All)</div>
<div style="position:absolute;left:436px;top:207px;width:19px;height:19px;background:#fff;border:1px solid #c8c8c8;box-sizing:border-box"></div>
<svg style="left:442px;top:215px" width="8" height="5" viewBox="0 0 8 5"><path d="M0 0 H8 L4 4.5 Z" fill="#7a7a7a"/></svg>
<div class="t" style="left:179px;top:254px;font-size:14.2px;font-weight:bold;color:#000">Average of Sales in $</div>
<div class="t" style="left:330px;top:254px;font-size:14.2px;font-weight:bold;color:#000">Column Labels</div>
<div style="position:absolute;left:436px;top:251px;width:19px;height:19px;background:#fff;border:1px solid #c8c8c8;box-sizing:border-box"></div>
<svg style="left:442px;top:259px" width="8" height="5" viewBox="0 0 8 5"><path d="M0 0 H8 L4 4.5 Z" fill="#7a7a7a"/></svg>
<div class="t" style="left:179px;top:276px;font-size:14.2px;font-weight:bold;color:#000">Row Labels</div>
<div style="position:absolute;left:308px;top:273px;width:19px;height:19px;background:#fff;border:1px solid #c8c8c8;box-sizing:border-box"></div>
<svg style="left:314px;top:281px" width="8" height="5" viewBox="0 0 8 5"><path d="M0 0 H8 L4 4.5 Z" fill="#7a7a7a"/></svg>
<div class="t" style="left:330px;top:276px;font-size:14.2px;font-weight:bold;color:#000">Cables</div>
<div class="t" style="left:458px;top:276px;font-size:14.2px;font-weight:bold;color:#000">Hard Disk Drives</div>
<div class="t" style="left:581px;top:276px;font-size:14.2px;font-weight:bold;color:#000">Keyboard</div>
<div class="t" style="left:655px;top:276px;font-size:14.2px;font-weight:bold;color:#000">Laptop</div>
<div class="t" style="left:711px;top:276px;font-size:14.2px;font-weight:bold;color:#000">Monitor</div>
<div class="t" style="left:775px;top:276px;font-size:14.2px;font-weight:bold;color:#000">Mouse</div>
<div class="t" style="left:830px;top:276px;font-size:14.2px;font-weight:bold;color:#000">Printers</div>
<div class="t" style="left:893px;top:276px;font-size:14.2px;font-weight:bold;color:#000">Scanners</div>
<div class="t" style="left:962px;top:276px;font-size:14.2px;font-weight:bold;color:#000">Grand Total</div>
<div class="t" style="left:179px;top:298px;font-size:15px;font-weight:normal;color:#000">Gerald</div>
<div class="t" style="left:179px;top:320px;font-size:15px;font-weight:normal;color:#000">Harry</div>
<div class="t" style="left:179px;top:342px;font-size:15px;font-weight:normal;color:#000">Jean</div>
<div class="t" style="left:179px;top:364px;font-size:15px;font-weight:normal;color:#000">Mark</div>
<div class="t" style="left:179px;top:386px;font-size:15px;font-weight:normal;color:#000">Shaun</div>
<div class="t" style="left:179px;top:409px;font-size:15px;font-weight:normal;color:#000">Tom</div>
<div class="t" style="right:906px;top:298px;font-size:15px;font-weight:normal;color:#000">1170</div>
<div class="t" style="right:312px;top:298px;font-size:15px;font-weight:normal;color:#000">1170</div>
<div class="t" style="right:653px;top:320px;font-size:15px;font-weight:normal;color:#000">16700</div>
<div class="t" style="right:312px;top:320px;font-size:15px;font-weight:normal;color:#000">16700</div>
<div class="t" style="right:783px;top:342px;font-size:15px;font-weight:normal;color:#000">1175</div>
<div class="t" style="right:312px;top:342px;font-size:15px;font-weight:normal;color:#000">1175</div>
<div class="t" style="right:709px;top:364px;font-size:15px;font-weight:normal;color:#000">870</div>
<div class="t" style="right:589px;top:364px;font-size:15px;font-weight:normal;color:#000">775</div>
<div class="t" style="right:312px;top:364px;font-size:15px;font-weight:normal;color:#000">822.5</div>
<div class="t" style="right:402px;top:386px;font-size:15px;font-weight:normal;color:#000">1595</div>
<div class="t" style="right:312px;top:386px;font-size:15px;font-weight:normal;color:#000">1595</div>
<div class="t" style="right:534px;top:409px;font-size:15px;font-weight:normal;color:#000">1075</div>
<div class="t" style="right:471px;top:409px;font-size:15px;font-weight:normal;color:#000">1150</div>
<div class="t" style="right:312px;top:409px;font-size:15px;font-weight:normal;color:#000">1112.5</div>
<div class="t" style="left:179px;top:431px;font-size:14.2px;font-weight:bold;color:#000">Grand Total</div>
<div class="t" style="right:906px;top:431px;font-size:14.2px;font-weight:bold;color:#000">1170</div>
<div class="t" style="right:783px;top:431px;font-size:14.2px;font-weight:bold;color:#000">1175</div>
<div class="t" style="right:709px;top:431px;font-size:14.2px;font-weight:bold;color:#000">870</div>
<div class="t" style="right:653px;top:431px;font-size:14.2px;font-weight:bold;color:#000">16700</div>
<div class="t" style="right:589px;top:431px;font-size:14.2px;font-weight:bold;color:#000">775</div>
<div class="t" style="right:534px;top:431px;font-size:14.2px;font-weight:bold;color:#000">1075</div>
<div class="t" style="right:471px;top:431px;font-size:14.2px;font-weight:bold;color:#000">1150</div>
<div class="t" style="right:402px;top:431px;font-size:14.2px;font-weight:bold;color:#000">1595</div>
<div class="t" style="right:312px;top:431px;font-size:14.2px;font-weight:bold;color:#000">3063.75</div>
<div class="t" style="left:179px;top:475px;font-size:14.2px;font-weight:bold;color:#000">Max of Sales in $</div>
<div class="t" style="right:1034px;top:497px;font-size:15px;font-weight:normal;color:#000">16700</div>
<div style="position:absolute;left:176px;top:293px;width:152px;height:23px;border:2px solid #16743f;box-sizing:border-box"></div>
<div style="position:absolute;left:324px;top:312px;width:6px;height:6px;background:#16743f;border:1px solid #fff"></div>
<div style="position:absolute;left:1076px;top:176px;width:23px;height:335px;background:#f8f8f8"></div>
<div style="position:absolute;left:1076px;top:176px;width:23px;height:144px;background:#efefef"></div>
<svg style="left:1082px;top:189px" width="11" height="8" viewBox="0 0 11 8"><path d="M5.5 0.5 L10.5 7.5 H0.5 Z" fill="#6e6e6e"/></svg>
<div style="position:absolute;left:1083px;top:203px;width:9px;height:289px;background:#707070;border-radius:5px"></div>
<div style="position:absolute;left:1099px;top:176px;width:259px;height:335px;background:#f9f9f9"></div>
<div style="position:absolute;left:1099px;top:176px;width:103px;height:144px;background:#efefef"></div>
<div style="position:absolute;left:1099px;top:176px;width:1px;height:335px;background:#dadada"></div>
<div class="t" style="left:1112px;top:196px;font-size:24.5px;color:#3a8a5d;font-weight:normal;letter-spacing:-0.6px">PivotTable Fields</div>
<div class="t" style="left:1115px;top:242px;font-size:14px;color:#444;font-weight:normal;">Choose fields to add to report:</div>
<div style="position:absolute;left:1114px;top:278px;width:260px;height:23px;background:#fff;border:1px solid #ababab;box-sizing:border-box"></div>
<div class="t" style="left:1116px;top:284px;font-size:13.2px;color:#666;font-weight:normal;">Search</div>
<svg style="left:1116px;top:321px" width="15" height="15" viewBox="0 0 15 15"><rect x="0.5" y="0.5" width="14" height="14" fill="#fff" stroke="#7a7a7a" stroke-width="1"/><path d="M3.5 7.5 L6.3 10.5 L11.5 3.5" fill="none" stroke="#666" stroke-width="1.3"/></svg>
<div class="t" style="left:1137px;top:324px;font-size:13.5px;font-weight:bold;color:#333">Product</div>
<svg style="left:1116px;top:345px" width="15" height="15" viewBox="0 0 15 15"><rect x="0.5" y="0.5" width="14" height="14" fill="#fff" stroke="#7a7a7a" stroke-width="1"/><path d="M3.5 7.5 L6.3 10.5 L11.5 3.5" fill="none" stroke="#666" stroke-width="1.3"/></svg>
<div class="t" style="left:1137px;top:348px;font-size:13.5px;font-weight:bold;color:#333">Branch</div>
<svg style="left:1116px;top:369px" width="15" height="15" viewBox="0 0 15 15"><rect x="0.5" y="0.5" width="14" height="14" fill="#fff" stroke="#7a7a7a" stroke-width="1"/><path d="M3.5 7.5 L6.3 10.5 L11.5 3.5" fill="none" stroke="#666" stroke-width="1.3"/></svg>
<div class="t" style="left:1137px;top:372px;font-size:13.5px;font-weight:bold;color:#333">Salesperson</div>
<div style="position:absolute;left:1100px;top:383.5px;width:258px;height:20px;background:#f9f9f9"></div>
<div class="t" style="left:1118px;top:409px;font-size:13.5px;color:#444;font-weight:normal;">Drag fields between areas below:</div>
<div style="position:absolute;left:1117px;top:444px;width:1px;height:67px;background:#7a7a7a"></div>
<svg style="left:1122px;top:447px" width="14" height="13" viewBox="0 0 14 13"><path d="M0 0 H14 L8.5 5.5 V12.5 H5.5 V5.5 Z" fill="#7d7d7d"/></svg>
<div class="t" style="left:1144px;top:448px;font-size:14px;color:#444;font-weight:normal;">Filters</div>
<svg style="left:1292px;top:447px" width="11" height="12" viewBox="0 0 11 12"><rect x="0" y="0" width="3" height="12" fill="#888"/><rect x="4.5" y="0" width="1" height="12" fill="#888"/><rect x="7" y="0" width="1" height="12" fill="#888"/><rect x="9.5" y="0" width="1" height="12" fill="#888"/></svg>
<div class="t" style="left:1312px;top:448px;font-size:14px;color:#444;font-weight:normal;">Columns</div>
<div style="position:absolute;left:1119px;top:471px;width:158px;height:24px;background:#fff;border:1px solid #c6c6c6;box-sizing:border-box"></div>
<div class="t" style="left:1128px;top:478px;font-size:12.5px;color:#333;font-weight:normal;">Branch</div>
<svg style="left:1256px;top:480px" width="9" height="5" viewBox="0 0 9 5"><path d="M0 0 H9 L4.5 5 Z" fill="#333"/></svg>
<div style="position:absolute;left:1287px;top:471px;width:100px;height:24px;background:#fff;border:1px solid #c6c6c6;box-sizing:border-box"></div>
<div class="t" style="left:1297px;top:478px;font-size:12px;color:#333;font-weight:normal;">Product</div>
</body></html>
